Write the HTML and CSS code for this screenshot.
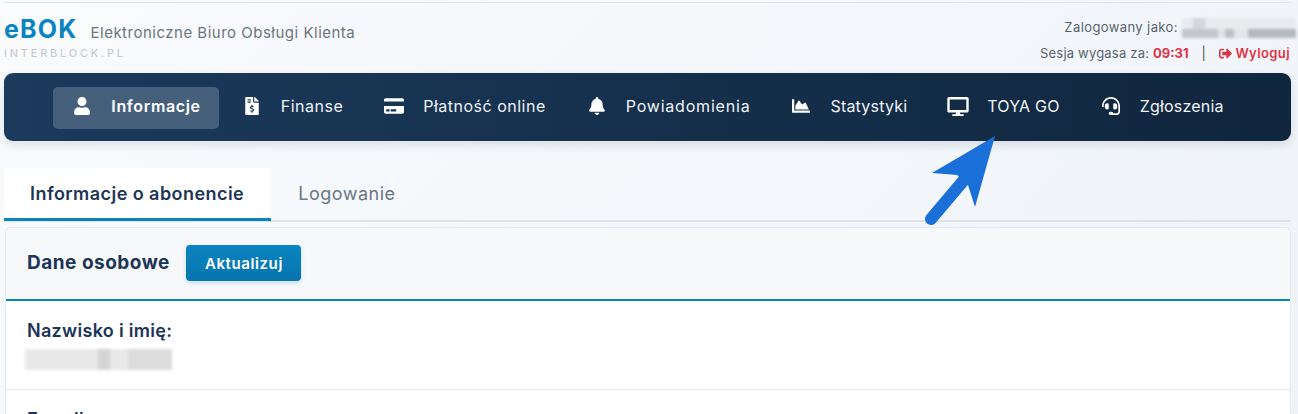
FILE: index.html
```html
<!DOCTYPE html>
<html lang="pl">
<head>
    <meta charset="UTF-8">
    <meta name="viewport" content="width=device-width, initial-scale=1.0">
    <title>eBOK - Elektroniczne Biuro Obsługi Klienta</title>
    <link rel="stylesheet" href="styles.css">
</head>
<body>
    <div class="page">
        <header class="top">
            <div class="brand">
                <div class="brand-line">
                    <span class="logo">eBOK</span>
                    <span class="subtitle">Elektroniczne Biuro Obsługi Klienta</span>
                </div>
                <div class="domain">INTERBLOCK.PL</div>
            </div>
            <div class="session">
                <div class="session-line">Zalogowany jako: <span class="blur blur-user"></span></div>
                <div class="session-line">
                    Sesja wygasa za: <strong class="timer">09:31</strong>
                    <span class="sep">|</span>
                    <a class="logout" href="#">
                        <svg class="logout-icon" viewBox="0 0 512 512"><path d="M497 273L329 441c-15 15-41 4.5-41-17v-96H152c-13.3 0-24-10.7-24-24v-96c0-13.3 10.7-24 24-24h136V88c0-21.4 25.9-32 41-17l168 168c9.3 9.4 9.3 24.6 0 34zM192 436v-40c0-6.6-5.4-12-12-12H96c-17.7 0-32-14.3-32-32V160c0-17.7 14.3-32 32-32h84c6.6 0 12-5.4 12-12V76c0-6.6-5.4-12-12-12H96c-53 0-96 43-96 96v192c0 53 43 96 96 96h84c6.6 0 12-5.4 12-12z"/></svg>
                        Wyloguj
                    </a>
                </div>
            </div>
        </header>

        <nav class="nav">
            <a class="nav-item active" href="#">
                <span class="nav-icon"><svg width="16" height="18" viewBox="0 0 448 512"><path d="M224 256c70.7 0 128-57.3 128-128S294.7 0 224 0 96 57.3 96 128s57.3 128 128 128zm89.6 32h-16.7c-22.2 10.2-46.9 16-72.9 16s-50.6-5.8-72.9-16h-16.7C60.2 288 0 348.2 0 422.4V464c0 26.5 21.5 48 48 48h352c26.5 0 48-21.5 48-48v-41.6c0-74.2-60.2-134.4-134.4-134.4z"/></svg></span>
                Informacje
            </a>
            <a class="nav-item" href="#">
                <span class="nav-icon"><svg width="14" height="18" viewBox="0 0 384 512"><path d="M377 105L279.1 7c-4.5-4.5-10.6-7-17-7H256v128h128v-6.1c0-6.3-2.5-12.4-7-16.9zm-153 31V0H24C10.7 0 0 10.7 0 24v464c0 13.3 10.7 24 24 24h336c13.3 0 24-10.7 24-24V160H248c-13.2 0-24-10.8-24-24zM64 72c0-4.42 3.58-8 8-8h80c4.42 0 8 3.58 8 8v16c0 4.42-3.58 8-8 8H72c-4.42 0-8-3.58-8-8V72zm0 80v-16c0-4.42 3.58-8 8-8h80c4.42 0 8 3.58 8 8v16c0 4.42-3.58 8-8 8H72c-4.42 0-8-3.58-8-8zm144 263.88V440c0 4.42-3.58 8-8 8h-16c-4.42 0-8-3.58-8-8v-24.29c-11.29-.58-22.27-4.52-31.37-11.35-3.9-2.93-4.1-8.77-.57-12.14l11.75-11.21c2.77-2.64 6.89-2.76 10.13-.73 3.87 2.42 8.26 3.72 12.82 3.72h28.11c6.5 0 11.8-5.92 11.8-13.19 0-5.95-3.61-11.19-8.77-12.73l-45-13.5c-18.59-5.58-31.58-23.42-31.58-43.39 0-24.52 19.05-44.44 42.67-45.07V232c0-4.42 3.58-8 8-8h16c4.42 0 8 3.58 8 8v24.29c11.29.58 22.27 4.51 31.37 11.35 3.9 2.93 4.1 8.77.57 12.14l-11.75 11.21c-2.77 2.64-6.89 2.76-10.13.73-3.87-2.43-8.26-3.72-12.82-3.72h-28.11c-6.5 0-11.8 5.92-11.8 13.19 0 5.95 3.61 11.19 8.77 12.73l45 13.5c18.59 5.58 31.58 23.42 31.58 43.39 0 24.53-19.05 44.44-42.67 45.07z"/></svg></span>
                Finanse
            </a>
            <a class="nav-item" href="#">
                <span class="nav-icon"><svg width="20" height="18" viewBox="0 0 576 512"><path d="M0 432c0 26.5 21.5 48 48 48h480c26.5 0 48-21.5 48-48V256H0v176zm192-68c0-6.6 5.4-12 12-12h136c6.6 0 12 5.4 12 12v40c0 6.6-5.4 12-12 12H204c-6.6 0-12-5.4-12-12v-40zm-128 0c0-6.6 5.4-12 12-12h72c6.6 0 12 5.4 12 12v40c0 6.6-5.4 12-12 12H76c-6.6 0-12-5.4-12-12v-40zM576 80v48H0V80c0-26.5 21.5-48 48-48h480c26.5 0 48 21.5 48 48z"/></svg></span>
                Płatność online
            </a>
            <a class="nav-item wide" href="#">
                <span class="nav-icon"><svg width="16" height="18" viewBox="0 0 448 512"><path d="M224 512c35.32 0 63.97-28.65 63.97-64H160.03c0 35.35 28.65 64 63.97 64zm215.39-149.71c-19.32-20.76-55.47-51.99-55.47-154.29 0-77.7-54.48-139.9-127.94-155.16V32c0-17.67-14.32-32-31.98-32s-31.98 14.33-31.98 32v20.84C118.56 68.1 64.08 130.3 64.08 208c0 102.3-36.15 133.53-55.47 154.29-6 6.45-8.66 14.16-8.61 21.71.11 16.4 12.98 32 32.1 32h383.8c19.12 0 32-15.6 32.1-32 .05-7.55-2.61-15.27-8.61-21.71z"/></svg></span>
                Powiadomienia
            </a>
            <a class="nav-item tight" href="#">
                <span class="nav-icon"><svg width="18" height="18" viewBox="0 0 512 512"><path d="M500 384c6.6 0 12 5.4 12 12v40c0 6.6-5.4 12-12 12H12c-6.6 0-12-5.4-12-12V76c0-6.6 5.4-12 12-12h40c6.6 0 12 5.4 12 12v308h436zM372.7 159.5L288 216l-85.3-113.7c-5.1-6.8-15.5-6.3-19.9 1L96 248v104h384l-89.9-187.8c-3.2-6.5-11.4-8.7-17.4-4.7z"/></svg></span>
                Statystyki
            </a>
            <a class="nav-item tight" href="#">
                <span class="nav-icon"><svg width="22" height="19" viewBox="0 0 576 512"><path d="M528 0H48C21.5 0 0 21.5 0 48v320c0 26.5 21.5 48 48 48h192l-16 48h-72c-13.3 0-24 10.7-24 24s10.7 24 24 24h272c13.3 0 24-10.7 24-24s-10.7-24-24-24h-72l-16-48h192c26.5 0 48-21.5 48-48V48c0-26.5-21.5-48-48-48zm-16 352H64V64h448v288z"/></svg></span>
                TOYA GO
            </a>
            <a class="nav-item tight" href="#">
                <span class="nav-icon"><svg width="18" height="18" viewBox="0 0 512 512"><path d="M192 208c0-17.67-14.33-32-32-32h-16c-35.35 0-64 28.65-64 64v48c0 35.35 28.65 64 64 64h16c17.67 0 32-14.33 32-32V208zm176 144c35.35 0 64-28.65 64-64v-48c0-35.35-28.65-64-64-64h-16c-17.67 0-32 14.33-32 32v112c0 17.67 14.33 32 32 32h16zM256 0C113.18 0 4.58 118.83 0 256v16c0 8.84 7.16 16 16 16h16c8.84 0 16-7.16 16-16v-16c0-114.69 93.31-208 208-208s208 93.31 208 208h-.12c.08 2.43.12 165.72.12 165.72 0 23.35-18.93 42.28-42.28 42.28H320c0-26.51-21.49-48-48-48h-32c-26.51 0-48 21.49-48 48s21.49 48 48 48h181.72c49.86 0 90.28-40.42 90.28-90.28V256C507.42 118.83 398.82 0 256 0z"/></svg></span>
                Zgłoszenia
            </a>
        </nav>

        <div class="tabs">
            <a class="tab active" href="#">Informacje o abonencie</a>
            <a class="tab" href="#">Logowanie</a>
        </div>

        <section class="card">
            <div class="card-head">
                <h2>Dane osobowe</h2>
                <button class="btn" type="button">Aktualizuj</button>
            </div>
            <div class="row">
                <div class="row-label">Nazwisko i imię:</div>
                <div class="blur blur-name"></div>
            </div>
            <div class="row">
                <div class="row-label">E-mail:</div>
            </div>
        </section>
    </div>

    <svg class="arrow" width="80" height="100" viewBox="0 0 80 100">
        <path d="M12 43L37 45L48 55L55 77L75 6Z" fill="#1b6fd8"/>
        <path d="M44 50L11 89" stroke="#1b6fd8" stroke-width="12" stroke-linecap="round" fill="none"/>
    </svg>
</body>
</html>
```

FILE: styles.css
```css
html, body {
    margin: 0;
    padding: 0;
    height: 100%;
    overflow: hidden;
}
body {
    font-family: Inter, 'Open Sans', sans-serif;
    background: linear-gradient(135deg, #f9fbfd, #eff3f8);
    color: #1d3557;
    position: relative;
}
a {
    text-decoration: none;
}
.page {
    margin: 2px 7px 0 4px;
    border-top: 1px solid #dfe3e8;
}
.top {
    display: flex;
    justify-content: space-between;
    height: 70px;
}
.brand-line {
    display: flex;
    align-items: baseline;
    gap: 13px;
    margin-top: 12px;
}
.logo {
    font-size: 25px;
    line-height: 29px;
    font-weight: 700;
    letter-spacing: 1.2px;
    color: #0a84c1;
}
.subtitle {
    font-size: 15px;
    color: #6c757d;
    letter-spacing: 0.5px;
}
.domain {
    font-size: 11px;
    line-height: 16px;
    margin-top: 1px;
    letter-spacing: 2.8px;
    color: #c3c7cc;
}
.session {
    text-align: right;
    font-size: 13px;
    letter-spacing: 0.2px;
    color: #5a6470;
    margin-right: 1px;
}
.session-line {
    height: 26px;
    line-height: 26px;
    white-space: nowrap;
}
.session-line:first-child {
    margin-top: 11px;
    letter-spacing: 0.4px;
}
.blur {
    display: inline-block;
    filter: blur(1.5px);
}
.blur-user {
    width: 114px;
    height: 20px;
    vertical-align: middle;
    margin-right: -6px;
    background:
        linear-gradient(90deg, #c2c5c9 0 32%, #e3e5e8 32% 38%, #bcbfc4 38% 46%, #e3e5e8 46% 58%, #b5b8bd 58% 100%) bottom / 100% 45% no-repeat,
        linear-gradient(90deg, #e8eaed 0 10%, #d3d6da 10% 20%, #e8eaed 20% 100%) top / 100% 55% no-repeat;
}
.timer {
    color: #dc3545;
    letter-spacing: 0;
}
.sep {
    margin: 0 9px;
    color: #4a4f55;
}
.logout {
    color: #dc3545;
    font-weight: 600;
    letter-spacing: 0.4px;
}
.logout-icon {
    width: 13px;
    height: 13px;
    fill: #dc3545;
    vertical-align: -2px;
}
.nav {
    display: flex;
    justify-content: center;
    gap: 4px;
    padding: 14px 0 12px;
    height: 42px;
    background: linear-gradient(90deg, #1b3a5c, #10263d);
    border-radius: 9px;
    box-shadow: 0 4px 10px rgba(16, 38, 61, 0.12);
}
.nav-item {
    display: flex;
    align-items: center;
    padding: 0 18px 4px;
    border-radius: 5px;
    font-size: 16px;
    font-weight: 400;
    letter-spacing: 0.5px;
    color: #f0f3f6;
    white-space: nowrap;
}
.nav-item.wide {
    letter-spacing: 0.8px;
}
.nav-item.tight {
    letter-spacing: 0.2px;
}
.nav-item.active {
    background: #46607c;
    font-weight: 600;
    letter-spacing: 0.65px;
    color: #fff;
}
.nav-icon {
    display: flex;
    justify-content: center;
    width: 22px;
    margin-right: 18px;
    fill: #fff;
}
.tabs {
    display: flex;
    margin-top: 27px;
    border-bottom: 2px solid #dfe3e8;
    height: 52px;
}
.tab {
    height: 51px;
    line-height: 51px;
    padding: 0 27px;
    font-size: 18px;
    color: #6b7683;
    font-weight: 400;
    letter-spacing: 0.5px;
}
.tab.active {
    background: #fff;
    color: #1d3557;
    font-weight: 600;
    letter-spacing: 0.45px;
    padding: 0 27px 0 26px;
    border-bottom: 3px solid #0a84c1;
    height: 50px;
}
.card {
    margin: 5px 0 0 1px;
    background: #fff;
    border: 1px solid #e4e7eb;
    border-bottom: 0;
    border-radius: 6px 6px 0 0;
}
.card-head {
    display: flex;
    align-items: center;
    gap: 16px;
    height: 68px;
    padding: 0 0 3px 21px;
    background: #f6f8fa;
    border-bottom: 2px solid #0a84c1;
    border-radius: 6px 6px 0 0;
}
.card-head h2 {
    margin: 0;
    font-size: 19px;
    font-weight: 700;
    color: #1d3557;
    letter-spacing: 0.5px;
}
.btn {
    font-family: inherit;
    font-size: 15px;
    font-weight: 600;
    letter-spacing: 0.6px;
    height: 36px;
    margin-top: 2px;
    padding: 0 18px 0 19px;
    color: #fff;
    background: linear-gradient(180deg, #0a84c1, #0774ad);
    border: none;
    border-radius: 4px;
    box-shadow: 0 2px 4px rgba(10, 132, 193, 0.2);
}
.row {
    padding: 19px 21px 19px;
    border-bottom: 1px solid #e4e7eb;
}
.row-label {
    font-size: 18px;
    line-height: 22px;
    font-weight: 600;
    letter-spacing: 0.3px;
    color: #1d3557;
}
.blur-name {
    display: block;
    width: 147px;
    height: 21px;
    margin: 7px 0 0 -2px;
    background: linear-gradient(90deg, #e8e8e9 0 50%, #d4d4d5 50% 58%, #e8e8e9 58% 70%, #dcdcdd 70% 100%);
}
.arrow {
    position: absolute;
    left: 920px;
    top: 130px;
}
```
